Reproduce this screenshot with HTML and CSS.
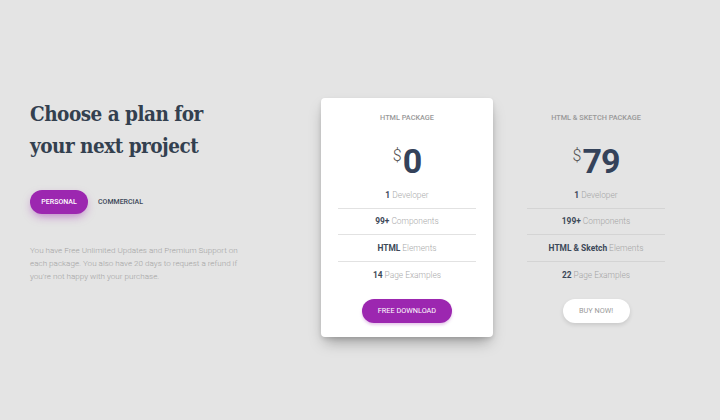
FILE: index.html
```html
<!DOCTYPE html>
<html>
<head>
<meta charset="utf-8">
<link rel="stylesheet" href="styles.css">
</head>
<body>
<div class="page">
  <div class="intro">
    <h2 class="title">Choose a plan for your next project</h2>
    <div class="tabs">
      <span class="tab active">Personal</span>
      <span class="tab">Commercial</span>
    </div>
    <p class="desc">You have Free Unlimited Updates and Premium Support on each package. You also have 20 days to request a refund if you're not happy with your purchase.</p>
  </div>
  <div class="card raised">
    <div class="card-cat">HTML Package</div>
    <div class="price"><span class="cur">$</span>0</div>
    <ul class="features">
      <li><b>1</b> Developer</li>
      <li><b>99+</b> Components</li>
      <li><b>HTML</b> Elements</li>
      <li><b>14</b> Page Examples</li>
    </ul>
    <span class="btn btn-primary">Free Download</span>
  </div>
  <div class="card plain">
    <div class="card-cat">HTML &amp; Sketch Package</div>
    <div class="price"><span class="cur">$</span>79</div>
    <ul class="features">
      <li><b>1</b> Developer</li>
      <li><b>199+</b> Components</li>
      <li><b>HTML &amp; Sketch</b> Elements</li>
      <li><b>22</b> Page Examples</li>
    </ul>
    <span class="btn btn-white">Buy Now!</span>
  </div>
</div>
</body>
</html>
```
FILE: styles.css
```css
html, body {
  margin: 0;
  padding: 0;
  background: #e4e4e4;
  font-family: Roboto, "Liberation Sans", sans-serif;
}
.page {
  display: flex;
  align-items: flex-start;
  padding: 98px 0 0 30px;
  height: 322px;
}
.intro {
  width: 260px;
  margin-right: 31px;
}
.title {
  margin: 0;
  font-family: "DejaVu Serif Condensed", "DejaVu Serif", serif;
  font-stretch: condensed;
  font-weight: bold;
  font-size: 20.5px;
  line-height: 32px;
  color: #33404f;
  width: 200px;
  letter-spacing: -0.5px;
}
.tabs {
  display: flex;
  align-items: center;
  margin-top: 28px;
}
.tab {
  font-size: 7px;
  font-weight: 500;
  text-transform: uppercase;
  color: #3c4858;
  height: 24px;
  line-height: 24px;
  padding: 0 10px;
  border-radius: 12px;
}
.tab.active {
  background: #9c27b0;
  color: #fff;
  padding: 0 11px;
  width: 36px;
  text-align: center;
  box-shadow: 0 4px 10px -2px rgba(156, 39, 176, 0.55);
}
.desc {
  margin: 30px 0 0;
  font-size: 8.1px;
  line-height: 13px;
  color: #a3a3a3;
  width: 216px;
  font-weight: 300;
}
.card {
  width: 172px;
  box-sizing: border-box;
  padding: 14px 17px;
  text-align: center;
  border-radius: 4px;
}
.card.raised {
  background: #fff;
  box-shadow: 0 8px 14px -4px rgba(0, 0, 0, 0.35), 0 2px 4px rgba(0, 0, 0, 0.1);
  margin-right: 17px;
}
.card-cat {
  font-size: 7.3px;
  line-height: 12px;
  font-weight: 500;
  text-transform: uppercase;
  color: #999;
}
.price {
  margin-top: 14px;
  font-size: 34px;
  line-height: 36px;
  font-weight: bold;
  color: #34425a;
  letter-spacing: -1px;
}
.cur {
  font-size: 16px;
  font-weight: 300;
  color: #555;
  vertical-align: 12px;
  margin-right: 1px;
  letter-spacing: 0;
}
.features {
  list-style: none;
  margin: 3px 0 0;
  padding: 0;
}
.features li {
  font-size: 8.4px;
  line-height: 12px;
  padding: 6.8px 0;
  color: #aaa;
  font-weight: 300;
  border-bottom: 1px solid #e2e2e2;
}
.card.plain .features li {
  border-bottom-color: #d4d4d4;
  color: #a5a5a5;
}
.features li:last-child {
  border-bottom: none;
}
.features b {
  color: #3c4858;
  font-weight: 700;
}
.btn {
  display: inline-block;
  margin-top: 12px;
  height: 24px;
  line-height: 24px;
  border-radius: 12px;
  font-size: 7.3px;
  text-transform: uppercase;
  font-weight: 400;
}
.btn-primary {
  width: 90px;
  background: #9c27b0;
  color: #fff;
  box-shadow: 0 2px 3px rgba(156, 39, 176, 0.25);
}
.btn-white {
  width: 67px;
  background: #fff;
  color: #999;
  box-shadow: 0 2px 4px rgba(0, 0, 0, 0.12);
}
```
